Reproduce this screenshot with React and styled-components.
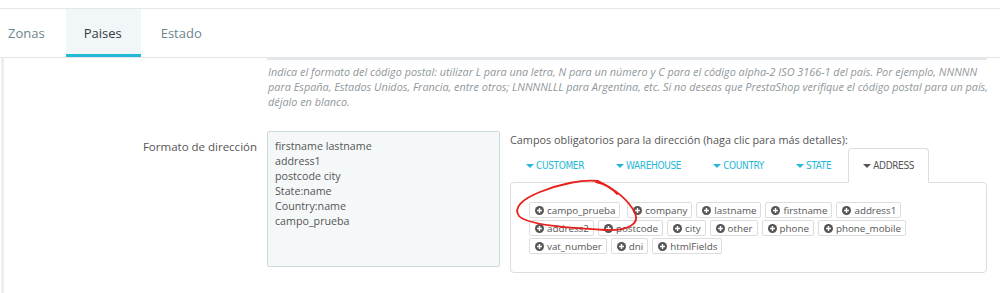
import React from "react";
import styled, { createGlobalStyle } from "styled-components";

const GlobalStyle = createGlobalStyle`
  * { box-sizing: border-box; }
  body {
    margin: 0;
    background: #fff;
    font-family: "Open Sans", "DejaVu Sans", sans-serif;
    color: #555;
  }
`;

const fields = [
  "campo_prueba", "company", "lastname", "firstname", "address1",
  "address2", "postcode", "city", "other", "phone", "phone_mobile",
  "vat_number", "dni", "htmlFields",
];

const subTabs = ["Customer", "Warehouse", "Country", "State", "Address"];

const addressText = `firstname lastname
address1
postcode city
State:name
Country:name
campo_prueba`;

function PlusIcon() {
  return (
    <svg width="9" height="9" viewBox="0 0 10 10">
      <circle cx="5" cy="5" r="5" fill="#555" />
      <path d="M5 2.3v5.4M2.3 5h5.4" stroke="#fff" strokeWidth="1.6" />
    </svg>
  );
}

function App() {
  return (
    <>
      <GlobalStyle />
      <Page>
        <TopNav>
          <NavTab $first>Zonas</NavTab>
          <NavTab $active>Paises</NavTab>
          <NavTab>Estado</NavTab>
        </TopNav>
        <Panel>
          <FormRow>
            <span />
            <div>
              <FieldEdge />
              <Help>
                Indica el formato del código postal: utilizar L para una letra,
                N para un número y C para el código alpha-2 ISO 3166-1 del país.
                Por ejemplo, NNNNN para España, Estados Unidos, Francia, entre
                otros; LNNNNLLL para Argentina, etc. Si no deseas que PrestaShop
                verifique el código postal para un país, déjalo en blanco.
              </Help>
            </div>
          </FormRow>
          <FormRow $spaced>
            <Label>Formato de dirección</Label>
            <Controls>
              <AddressBox readOnly defaultValue={addressText} />
              <FieldsColumn>
                <Caption>
                  Campos obligatorios para la dirección (haga clic para más
                  detalles):
                </Caption>
                <SubTabs>
                  {subTabs.map((t) => (
                    <SubTab key={t} $active={t === "Address"}>
                      <Caret $active={t === "Address"} />
                      {t}
                    </SubTab>
                  ))}
                </SubTabs>
                <TabBody>
                  {fields.map((f) => (
                    <FieldButton key={f} $extra={f === "campo_prueba"}>
                      <PlusIcon />
                      {f}
                    </FieldButton>
                  ))}
                </TabBody>
                <Scribble viewBox="510 133 477 145">
                  <path
                    d="M598 183 C583 181 560 186 540 194 C522 201 513 210 519 218 C527 227 570 230 605 232 C628 233 640 226 635 215 C629 203 619 193 598 183 M596 184 C605 186 612 190 617 196"
                    fill="none"
                    stroke="#e8201c"
                    strokeWidth="1.8"
                    strokeLinecap="round"
                  />
                </Scribble>
              </FieldsColumn>
            </Controls>
          </FormRow>
        </Panel>
      </Page>
    </>
  );
}

const Page = styled.div`
  width: 1000px;
  height: 293px;
  overflow: hidden;
  padding-top: 8px;
`;

const TopNav = styled.div`
  display: flex;
  gap: 2px;
  height: 50px;
  padding-left: 8px;
  border-top: 1px solid #e3e7e9;
  border-bottom: 1px solid #e3e7e9;
`;

const NavTab = styled.div`
  display: flex;
  align-items: center;
  padding: 3px 19px 0 ${(p) => (p.$first ? "0" : "18px")};
  font-size: 13px;
  color: ${(p) => (p.$active ? "#363a41" : "#6c868e")};
  background: ${(p) => (p.$active ? "#f1f6f9" : "transparent")};
  border-bottom: 3px solid ${(p) => (p.$active ? "#25b9d7" : "transparent")};
`;

const Panel = styled.div`
  margin-left: 1px;
  border-left: 3px solid #eceff1;
  height: 240px;
`;

const FormRow = styled.div`
  display: grid;
  grid-template-columns: 253px 1fr;
  column-gap: 10px;
  margin-top: ${(p) => (p.$spaced ? "22px" : "0")};
`;

const FieldEdge = styled.div`
  width: 720px;
  height: 2px;
  background: #e4e8ea;
`;

const Help = styled.p`
  margin: 4px 0 0 1px;
  width: 722px;
  font-size: 10.85px;
  font-style: italic;
  line-height: 15px;
  color: #8f979c;
`;

const Label = styled.div`
  text-align: right;
  font-size: 11.5px;
  line-height: 16px;
  padding-top: 8px;
  color: #555;
`;

const Controls = styled.div`
  display: flex;
  gap: 10px;
  align-items: flex-start;
`;

const AddressBox = styled.textarea`
  width: 233px;
  height: 136px;
  resize: none;
  padding: 7px;
  font-family: "Open Sans", sans-serif;
  font-size: 10.7px;
  line-height: 15px;
  color: #555;
  background: #f5f8f9;
  border: 1px solid #cdd9dd;
  border-radius: 2px;
  outline: none;
`;

const FieldsColumn = styled.div`
  position: relative;
  width: 477px;
`;

const Caption = styled.div`
  font-size: 10.85px;
  line-height: 16px;
  color: #555;
  padding-top: 1px;
`;

const SubTabs = styled.div`
  display: flex;
  gap: 2px;
  padding-left: 1px;
  margin-bottom: -1px;
  position: relative;
  z-index: 1;
`;

const SubTab = styled.div`
  display: flex;
  align-items: center;
  gap: 2px;
  height: 35px;
  padding: 0 14px;
  font-family: "DejaVu Sans Condensed", "Liberation Sans Narrow", sans-serif;
  font-stretch: condensed;
  font-size: 10px;
  letter-spacing: -0.35px;
  text-transform: uppercase;
  color: ${(p) => (p.$active ? "#555" : "#25b9d7")};
  background: ${(p) => (p.$active ? "#fff" : "transparent")};
  border: 1px solid ${(p) => (p.$active ? "#ddd" : "transparent")};
  border-bottom-color: ${(p) => (p.$active ? "#fff" : "transparent")};
  border-radius: 4px 4px 0 0;
`;

const Caret = styled.span`
  width: 0;
  height: 0;
  border-left: 4px solid transparent;
  border-right: 4px solid transparent;
  border-top: 4.5px solid ${(p) => (p.$active ? "#555" : "#25b9d7")};
`;

const TabBody = styled.div`
  display: flex;
  flex-wrap: wrap;
  align-content: flex-start;
  gap: 2px 4px;
  height: 91px;
  padding: 19px 60px 0 18px;
  border: 1px solid #ddd;
  border-radius: 4px;
`;

const FieldButton = styled.div`
  display: inline-flex;
  align-items: center;
  gap: 3px;
  height: 16px;
  padding: 0 4px 0 5px;
  margin-right: ${(p) => (p.$extra ? "3px" : "0")};
  font-size: 9.8px;
  color: #555;
  background: #fff;
  border: 1px solid #ddd;
  border-radius: 2px;
`;

const Scribble = styled.svg`
  position: absolute;
  left: 0;
  top: 0;
  width: 477px;
  height: 145px;
  pointer-events: none;
  z-index: 2;
`;

export default App;
